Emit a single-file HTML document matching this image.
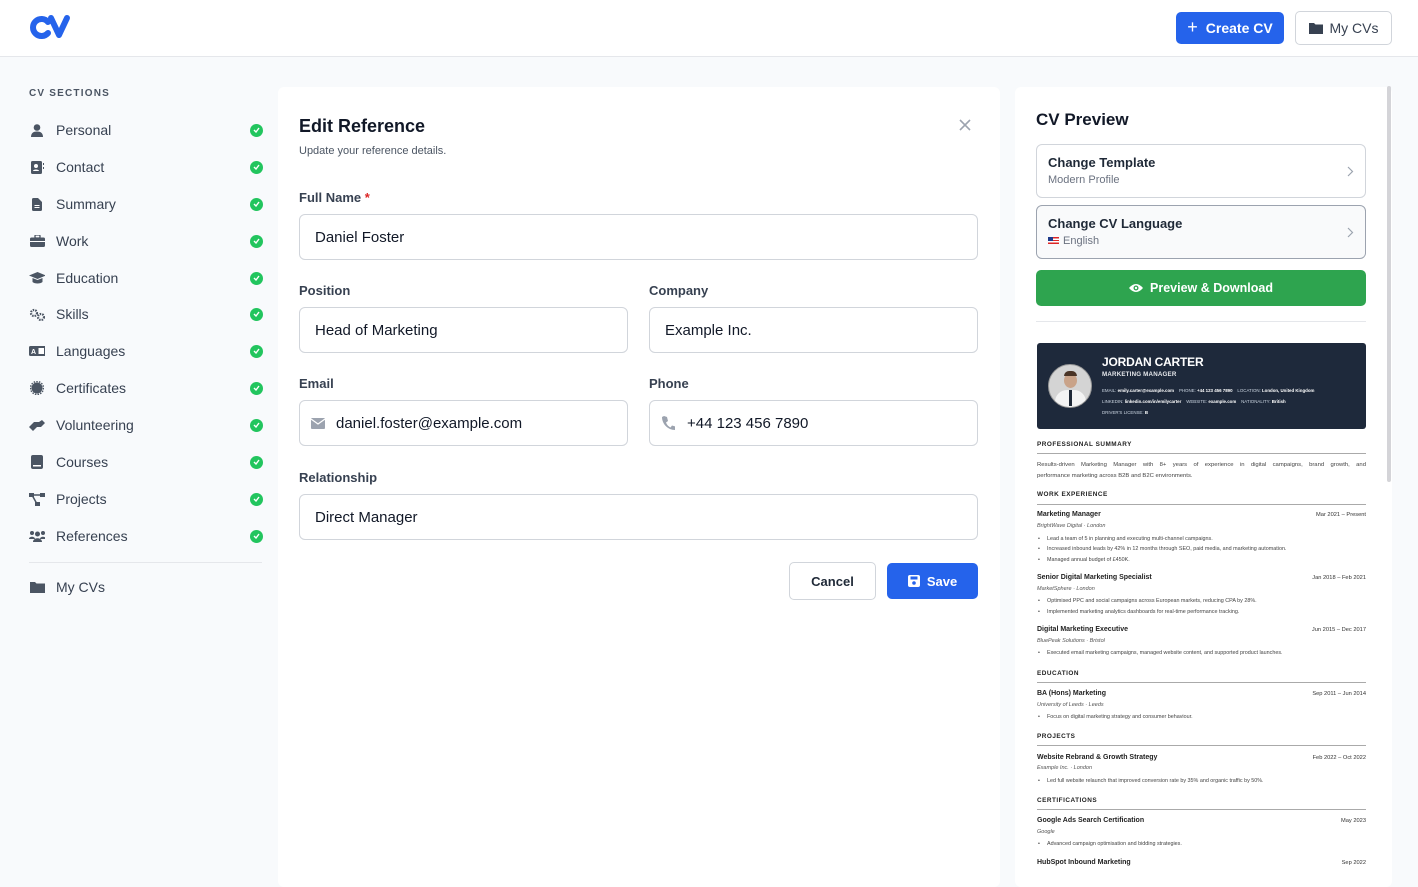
<!DOCTYPE html>
<html><head><meta charset="utf-8"><style>
*{box-sizing:border-box;margin:0;padding:0}
body{width:1418px;height:871px;overflow:hidden;background:#f8fafc;font-family:"Liberation Sans",Arial,sans-serif;color:#1f2937;position:relative}
.a{position:absolute}
.hdr{left:0;top:0;width:1418px;height:57px;background:#fff;border-bottom:1px solid #e5e7eb}
.btn{display:flex;align-items:center;justify-content:center;border-radius:5px;font-size:14px;font-weight:bold}
.sec{font-size:10px;font-weight:bold;letter-spacing:1.2px;color:#4b5563}
.nav{left:29px;width:234px;height:20px;display:flex;align-items:center;font-size:14px;color:#374151}
.nav .ic{width:16px;height:16px;margin-right:11px;display:flex;align-items:center;justify-content:center}
.nav .ck{margin-left:auto;width:13px;height:13px;border-radius:50%;background:#22c55e;display:flex;align-items:center;justify-content:center}
.card{background:#fff;border-radius:6px}
.lbl{font-size:13px;font-weight:bold;color:#374151}
.inp{border:1px solid #d1d5db;border-radius:6px;background:#fff;height:46px;display:flex;align-items:center;padding-left:15px;font-size:15px;color:#111827}
.cv{font-family:"Liberation Sans",Arial,sans-serif;color:#222}
.cv div{position:absolute;white-space:nowrap;line-height:10px}
.h{font-size:6.4px;font-weight:bold;letter-spacing:.5px;color:#222}
.r{height:1px;background:#aaa;width:329px}
.t{font-size:7px;font-weight:bold;color:#222}
.d{font-size:5.7px;color:#333;right:0}
.s{font-size:5.5px;font-style:italic;color:#555}
.b{font-size:5.4px;color:#444;padding-left:10px}
.b:before{content:"•";position:absolute;left:1px}
</style></head><body>
<div class="a hdr"></div>
<svg class="a" style="left:29px;top:14px" width="42" height="26" viewBox="0 0 42 26"><path d="M19 8 A8.5 8.5 0 1 0 19 19" fill="none" stroke="#2563eb" stroke-width="6" stroke-linecap="round"/><path d="M22 4 L30 21 L38 4" fill="none" stroke="#2563eb" stroke-width="6" stroke-linecap="round" stroke-linejoin="round"/></svg>
<div class="a btn" style="left:1176px;top:12px;width:108px;height:32px;background:#2563eb;color:#fff"><span style="font-size:18px;font-weight:normal;margin-right:8px;margin-top:-2px">+</span>Create CV</div>
<div class="a btn" style="left:1295px;top:11px;width:97px;height:34px;border:1px solid #d1d5db;background:#fff;color:#374151;font-weight:normal"><svg width="14" height="12" viewBox="0 0 14 12" style="margin-right:7px"><path d="M0 1h5l1.5 1.5H14V12H0z" fill="#374151"/></svg>My CVs</div>

<div class="a sec" style="left:29px;top:88px">CV SECTIONS</div>
<div class="a nav" style="top:120px"><span class="ic"><svg width="12" height="13"><circle cx="6" cy="3.5" r="3.3" fill="#4b5563"/><path d="M0 13c0-4 2.5-5.5 6-5.5s6 1.5 6 5.5z" fill="#4b5563"/></svg></span>Personal<span class="ck"><svg width="7" height="6"><path d="M1 3l2 2 3-4" stroke="#fff" stroke-width="1.4" fill="none"/></svg></span></div>
<div class="a nav" style="top:157px"><span class="ic"><svg width="13" height="13"><rect x="0" y="0" width="11" height="13" rx="1.5" fill="#4b5563"/><circle cx="5" cy="5" r="2" fill="#fff"/><path d="M2 10c0-2 6-2 6 0z" fill="#fff"/><rect x="12" y="2" width="1" height="2" fill="#4b5563"/><rect x="12" y="6" width="1" height="2" fill="#4b5563"/></svg></span>Contact<span class="ck"><svg width="7" height="6"><path d="M1 3l2 2 3-4" stroke="#fff" stroke-width="1.4" fill="none"/></svg></span></div>
<div class="a nav" style="top:194px"><span class="ic"><svg width="10" height="13"><path d="M0 1.5Q0 0 1.5 0H6l4 4v7.5Q10 13 8.5 13h-7Q0 13 0 11.5z" fill="#4b5563"/><rect x="2.5" y="7" width="5" height="1" fill="#fff"/><rect x="2.5" y="9" width="5" height="1" fill="#fff"/></svg></span>Summary<span class="ck"><svg width="7" height="6"><path d="M1 3l2 2 3-4" stroke="#fff" stroke-width="1.4" fill="none"/></svg></span></div>
<div class="a nav" style="top:231px"><span class="ic"><svg width="15" height="12"><rect x="5" y="0" width="5" height="3" rx="1" fill="none" stroke="#4b5563" stroke-width="1.3"/><rect x="0" y="2.5" width="15" height="9.5" rx="1.5" fill="#4b5563"/><rect x="0" y="6" width="15" height="1" fill="#fff"/></svg></span>Work<span class="ck"><svg width="7" height="6"><path d="M1 3l2 2 3-4" stroke="#fff" stroke-width="1.4" fill="none"/></svg></span></div>
<div class="a nav" style="top:268px"><span class="ic"><svg width="17" height="12"><path d="M8.5 0L17 3.5 8.5 7 0 3.5z" fill="#4b5563"/><path d="M3.5 6v4c2 2 8 2 10 0V6l-5 2z" fill="#4b5563"/></svg></span>Education<span class="ck"><svg width="7" height="6"><path d="M1 3l2 2 3-4" stroke="#fff" stroke-width="1.4" fill="none"/></svg></span></div>
<div class="a nav" style="top:304px"><span class="ic"><svg width="17" height="13"><circle cx="5" cy="5" r="3" fill="none" stroke="#4b5563" stroke-width="2.2" stroke-dasharray="1.5 1"/><circle cx="12" cy="9" r="3" fill="none" stroke="#4b5563" stroke-width="2.2" stroke-dasharray="1.5 1"/></svg></span>Skills<span class="ck"><svg width="7" height="6"><path d="M1 3l2 2 3-4" stroke="#fff" stroke-width="1.4" fill="none"/></svg></span></div>
<div class="a nav" style="top:341px"><span class="ic"><svg width="17" height="12"><rect x="0" y="1" width="17" height="10" rx="1.5" fill="#4b5563"/><text x="2" y="9" font-size="7" font-weight="bold" fill="#fff" font-family="Liberation Sans">A</text><rect x="9.5" y="3" width="5.5" height="6" fill="#fff"/></svg></span>Languages<span class="ck"><svg width="7" height="6"><path d="M1 3l2 2 3-4" stroke="#fff" stroke-width="1.4" fill="none"/></svg></span></div>
<div class="a nav" style="top:378px"><span class="ic"><svg width="14" height="14"><circle cx="7" cy="7" r="5.5" fill="#4b5563"/><circle cx="7" cy="7" r="6.5" fill="none" stroke="#4b5563" stroke-width="1.4" stroke-dasharray="1.5 1.2"/></svg></span>Certificates<span class="ck"><svg width="7" height="6"><path d="M1 3l2 2 3-4" stroke="#fff" stroke-width="1.4" fill="none"/></svg></span></div>
<div class="a nav" style="top:415px"><span class="ic"><svg width="17" height="13"><path d="M0 8l5-5h5l3-2 3 3-4 4H8l-4 4z" fill="#4b5563"/></svg></span>Volunteering<span class="ck"><svg width="7" height="6"><path d="M1 3l2 2 3-4" stroke="#fff" stroke-width="1.4" fill="none"/></svg></span></div>
<div class="a nav" style="top:452px"><span class="ic"><svg width="12" height="14"><rect x="0" y="0" width="12" height="14" rx="2" fill="#4b5563"/><rect x="2" y="10" width="8" height="1.5" fill="#fff"/></svg></span>Courses<span class="ck"><svg width="7" height="6"><path d="M1 3l2 2 3-4" stroke="#fff" stroke-width="1.4" fill="none"/></svg></span></div>
<div class="a nav" style="top:489px"><span class="ic"><svg width="16" height="13"><rect x="0" y="0" width="5" height="4" fill="#4b5563"/><rect x="11" y="0" width="5" height="4" fill="#4b5563"/><rect x="6" y="9" width="5" height="4" fill="#4b5563"/><path d="M3 2h10M3 2l5 9" stroke="#4b5563" stroke-width="1.5"/></svg></span>Projects<span class="ck"><svg width="7" height="6"><path d="M1 3l2 2 3-4" stroke="#fff" stroke-width="1.4" fill="none"/></svg></span></div>
<div class="a nav" style="top:526px"><span class="ic"><svg width="17" height="12"><circle cx="3" cy="3" r="2" fill="#4b5563"/><circle cx="14" cy="3" r="2" fill="#4b5563"/><circle cx="8.5" cy="4" r="2.5" fill="#4b5563"/><path d="M0 9c0-3 6-3 6 0zM11 9c0-3 6-3 6 0zM4 12c0-5 9-5 9 0z" fill="#4b5563"/></svg></span>References<span class="ck"><svg width="7" height="6"><path d="M1 3l2 2 3-4" stroke="#fff" stroke-width="1.4" fill="none"/></svg></span></div>
<div class="a" style="left:29px;top:562px;width:233px;height:1px;background:#e5e7eb"></div>
<div class="a nav" style="top:577px"><span class="ic"><svg width="15" height="12"><path d="M0 1h5l1.5 1.5H15V12H0z" fill="#4b5563"/></svg></span>My CVs</div>

<div class="a card" style="left:278px;top:87px;width:722px;height:800px"></div>
<div class="a" style="left:299px;top:116px;font-size:18px;font-weight:bold;color:#111827">Edit Reference</div>
<div class="a" style="left:299px;top:145px;font-size:11px;color:#4b5563">Update your reference details.</div>
<svg class="a" style="left:959px;top:119px" width="12" height="12"><path d="M1 1l10 10M11 1L1 11" stroke="#9ca3af" stroke-width="1.6"/></svg>
<div class="a lbl" style="left:299px;top:190px">Full Name <span style="color:#dc2626">*</span></div>
<div class="a inp" style="left:299px;top:214px;width:679px">Daniel Foster</div>
<div class="a lbl" style="left:299px;top:283px">Position</div>
<div class="a inp" style="left:299px;top:307px;width:329px">Head of Marketing</div>
<div class="a lbl" style="left:649px;top:283px">Company</div>
<div class="a inp" style="left:649px;top:307px;width:329px">Example Inc.</div>
<div class="a lbl" style="left:299px;top:376px">Email</div>
<div class="a inp" style="left:299px;top:400px;width:329px;padding-left:11px"><svg width="14" height="11" style="margin-right:11px"><rect width="14" height="11" rx="1" fill="#9ca3af"/><path d="M0 1l7 5 7-5" stroke="#fff" stroke-width="1.2" fill="none"/></svg>daniel.foster@example.com</div>
<div class="a lbl" style="left:649px;top:376px">Phone</div>
<div class="a inp" style="left:649px;top:400px;width:329px;padding-left:12px"><svg width="13" height="14" style="margin-right:12px"><path d="M2 0l3 1 1 4-2 1.5c1 2.5 2.5 4 4.5 5L10 9.5l3.5 1L13 14C6 14 0 8 0 1z" fill="#9ca3af"/></svg>+44 123 456 7890</div>
<div class="a lbl" style="left:299px;top:470px">Relationship</div>
<div class="a inp" style="left:299px;top:494px;width:679px">Direct Manager</div>
<div class="a btn" style="left:789px;top:562px;width:87px;height:38px;border:1px solid #d1d5db;background:#fff;color:#1f2937;font-size:13px">Cancel</div>
<div class="a btn" style="left:887px;top:563px;width:91px;height:36px;background:#2563eb;color:#fff;font-size:13px"><svg width="12" height="12" style="margin-right:7px"><rect width="12" height="12" rx="2" fill="#fff"/><rect x="2.5" y="1.5" width="7" height="3" fill="#2563eb"/><circle cx="6" cy="8" r="1.8" fill="#2563eb"/></svg>Save</div>

<div class="a card" style="left:1015px;top:87px;width:377px;height:800px"></div>
<div class="a" style="left:1387px;top:86px;width:4px;height:396px;background:#d4d4d8;border-radius:2px"></div>
<div class="a" style="left:1036px;top:110px;font-size:17px;font-weight:bold;color:#111827">CV Preview</div>
<div class="a" style="left:1036px;top:144px;width:330px;height:54px;border:1px solid #d1d5db;border-radius:6px"></div>
<div class="a" style="left:1048px;top:155px;font-size:13px;font-weight:bold;color:#1f2937">Change Template</div>
<div class="a" style="left:1048px;top:174px;font-size:11px;color:#6b7280">Modern Profile</div>
<svg class="a" style="left:1347px;top:166px" width="7" height="11"><path d="M1 1l4.5 4.5L1 10" stroke="#9ca3af" stroke-width="1.2" fill="none"/></svg>
<div class="a" style="left:1036px;top:205px;width:330px;height:54px;border:1px solid #9ca3af;border-radius:6px;background:#f9fafb"></div>
<div class="a" style="left:1048px;top:216px;font-size:13px;font-weight:bold;color:#1f2937">Change CV Language</div>
<div class="a" style="left:1048px;top:237px;width:11px;height:7px;background:linear-gradient(#dc2626 0 20%,#fff 20% 40%,#dc2626 40% 60%,#fff 60% 80%,#dc2626 80%)"><div style="position:absolute;left:0;top:0;width:5px;height:4px;background:#1e3a8a"></div></div>
<div class="a" style="left:1063px;top:235px;font-size:11px;color:#6b7280">English</div>
<svg class="a" style="left:1347px;top:227px" width="7" height="11"><path d="M1 1l4.5 4.5L1 10" stroke="#9ca3af" stroke-width="1.2" fill="none"/></svg>
<div class="a btn" style="left:1036px;top:270px;width:330px;height:36px;background:#2ea44f;color:#fff;font-size:12.5px"><svg width="14" height="10" style="margin-right:7px"><path d="M0 5Q7-3 14 5Q7 13 0 5z" fill="#fff"/><circle cx="7" cy="5" r="2.5" fill="#2ea44f"/><circle cx="7" cy="5" r="1.2" fill="#fff"/></svg>Preview &amp; Download</div>
<div class="a" style="left:1036px;top:321px;width:330px;height:1px;background:#e5e7eb"></div>

<div class="a" style="left:1037px;top:343px;width:329px;height:86px;background:#1e293b;border-radius:3px"></div>
<div class="a" style="left:1048px;top:364px;width:44px;height:44px;border-radius:50%;background:#d4d4d4;border:1px solid #999;overflow:hidden"><div style="position:absolute;left:15px;top:8px;width:13px;height:15px;border-radius:50%;background:#c9a389"></div><div style="position:absolute;left:15px;top:6px;width:13px;height:5px;border-radius:6px 6px 0 0;background:#4a3426"></div><div style="position:absolute;left:6px;top:25px;width:31px;height:22px;border-radius:12px 12px 0 0;background:#f3f3f3"></div><div style="position:absolute;left:20px;top:25px;width:3px;height:16px;background:#1f2937"></div></div>
<div class="a" style="left:1102px;top:355px;font-size:12px;font-weight:bold;color:#fff;letter-spacing:-.2px">JORDAN CARTER</div>
<div class="a" style="left:1102px;top:371px;font-size:6.2px;font-weight:bold;color:#e5e7eb;letter-spacing:.2px">MARKETING MANAGER</div>
<div class="a" style="left:1102px;top:388px;font-size:4.4px;color:#cbd5e1;white-space:nowrap">EMAIL: <b style="color:#fff">emily.carter@example.com</b> &nbsp;&nbsp; PHONE: <b style="color:#fff">+44 123 456 7890</b> &nbsp;&nbsp; LOCATION: <b style="color:#fff">London, United Kingdom</b></div>
<div class="a" style="left:1102px;top:399px;font-size:4.4px;color:#cbd5e1;white-space:nowrap">LINKEDIN: <b style="color:#fff">linkedin.com/in/emilycarter</b> &nbsp;&nbsp; WEBSITE: <b style="color:#fff">example.com</b> &nbsp;&nbsp; NATIONALITY: <b style="color:#fff">British</b></div>
<div class="a" style="left:1102px;top:410px;font-size:4.4px;color:#cbd5e1">DRIVER'S LICENSE: <b style="color:#fff">B</b></div>

<div class="a cv" style="left:1037px;top:0;width:329px;height:871px">
<div class="h" style="top:440px">PROFESSIONAL SUMMARY</div><div class="r" style="top:453px"></div>
<div style="top:460px;font-size:5.9px;color:#444;width:329px;text-align:justify;text-align-last:justify">Results-driven Marketing Manager with 8+ years of experience in digital campaigns, brand growth, and</div>
<div style="top:471px;font-size:5.9px;color:#444">performance marketing across B2B and B2C environments.</div>
<div class="h" style="top:490px">WORK EXPERIENCE</div><div class="r" style="top:504px"></div>
<div class="t" style="top:510px">Marketing Manager</div><div class="d" style="top:510px">Mar 2021 – Present</div>
<div class="s" style="top:521px">BrightWave Digital · London</div>
<div class="b" style="top:534px">Lead a team of 5 in planning and executing multi-channel campaigns.</div>
<div class="b" style="top:544px">Increased inbound leads by 42% in 12 months through SEO, paid media, and marketing automation.</div>
<div class="b" style="top:555px">Managed annual budget of £450K.</div>
<div class="t" style="top:573px">Senior Digital Marketing Specialist</div><div class="d" style="top:573px">Jan 2018 – Feb 2021</div>
<div class="s" style="top:584px">MarketSphere · London</div>
<div class="b" style="top:596px">Optimised PPC and social campaigns across European markets, reducing CPA by 28%.</div>
<div class="b" style="top:607px">Implemented marketing analytics dashboards for real-time performance tracking.</div>
<div class="t" style="top:625px">Digital Marketing Executive</div><div class="d" style="top:625px">Jun 2015 – Dec 2017</div>
<div class="s" style="top:636px">BluePeak Solutions · Bristol</div>
<div class="b" style="top:648px">Executed email marketing campaigns, managed website content, and supported product launches.</div>
<div class="h" style="top:669px">EDUCATION</div><div class="r" style="top:682px"></div>
<div class="t" style="top:689px">BA (Hons) Marketing</div><div class="d" style="top:689px">Sep 2011 – Jun 2014</div>
<div class="s" style="top:700px">University of Leeds · Leeds</div>
<div class="b" style="top:712px">Focus on digital marketing strategy and consumer behaviour.</div>
<div class="h" style="top:732px">PROJECTS</div><div class="r" style="top:745px"></div>
<div class="t" style="top:753px">Website Rebrand &amp; Growth Strategy</div><div class="d" style="top:753px">Feb 2022 – Oct 2022</div>
<div class="s" style="top:763px">Example Inc. · London</div>
<div class="b" style="top:776px">Led full website relaunch that improved conversion rate by 35% and organic traffic by 50%.</div>
<div class="h" style="top:796px">CERTIFICATIONS</div><div class="r" style="top:809px"></div>
<div class="t" style="top:816px">Google Ads Search Certification</div><div class="d" style="top:816px">May 2023</div>
<div class="s" style="top:827px">Google</div>
<div class="b" style="top:839px">Advanced campaign optimisation and bidding strategies.</div>
<div class="t" style="top:858px">HubSpot Inbound Marketing</div><div class="d" style="top:858px">Sep 2022</div>
</div>
</body></html>
